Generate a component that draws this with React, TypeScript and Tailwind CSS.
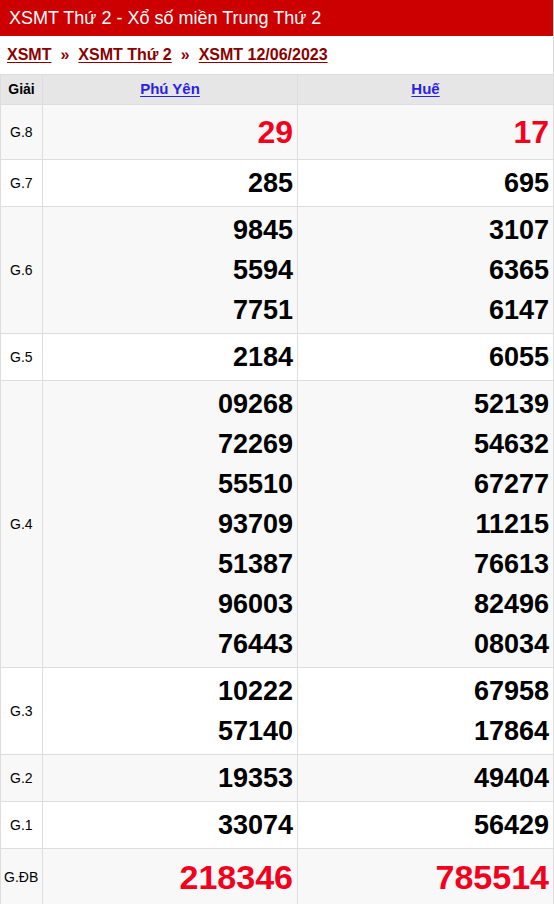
const rows: { label: string; a: string[]; b: string[]; red?: boolean; big?: "g8" | "db" }[] = [
  { label: "G.8", a: ["29"], b: ["17"], red: true, big: "g8" },
  { label: "G.7", a: ["285"], b: ["695"] },
  { label: "G.6", a: ["9845", "5594", "7751"], b: ["3107", "6365", "6147"] },
  { label: "G.5", a: ["2184"], b: ["6055"] },
  {
    label: "G.4",
    a: ["09268", "72269", "55510", "93709", "51387", "96003", "76443"],
    b: ["52139", "54632", "67277", "11215", "76613", "82496", "08034"],
  },
  { label: "G.3", a: ["10222", "57140"], b: ["67958", "17864"] },
  { label: "G.2", a: ["19353"], b: ["49404"] },
  { label: "G.1", a: ["33074"], b: ["56429"] },
  { label: "G.ĐB", a: ["218346"], b: ["785514"], red: true, big: "db" },
]

function Nums({ list, red, big }: { list: string[]; red?: boolean; big?: "g8" | "db" }) {
  const size =
    big === "g8"
      ? "text-[32px] leading-[48px]"
      : big === "db"
        ? "text-[34px] leading-[50px]"
        : "text-[27px] leading-[40px]"
  return (
    <td className="border border-[#dddddd] py-[3px] pr-[4px] text-right align-middle">
      {list.map((n) => (
        <div key={n} className={`font-bold ${size} ${red ? "text-[#f2001c]" : "text-black"}`}>
          {n}
        </div>
      ))}
    </td>
  )
}

export default function App() {
  return (
    <div className="w-[554px] min-h-[904px] bg-white border-r border-[#d6d6d6] font-['Liberation_Sans',Arial,sans-serif]">
      <div className="h-[36px] bg-[#cc0000] flex items-center px-[9px]">
        <h1 className="text-white text-[18px] leading-none">XSMT Thứ 2 - Xổ số miền Trung Thứ 2</h1>
      </div>
      <div className="h-[38px] flex items-center px-[7px] gap-[9px] text-[16px] font-bold text-[#8b0000]">
        <a href="#" className="underline underline-offset-2">XSMT</a>
        <span>»</span>
        <a href="#" className="underline underline-offset-2">XSMT Thứ 2</a>
        <span>»</span>
        <a href="#" className="underline underline-offset-2">XSMT 12/06/2023</a>
      </div>
      <table className="w-[553px] border-collapse table-fixed">
        <colgroup>
          <col className="w-[42px]" />
          <col className="w-[255px]" />
          <col className="w-[256px]" />
        </colgroup>
        <thead>
          <tr className="bg-[#e6e6e6] h-[30px]">
            <th className="border border-[#dddddd] text-[14px] font-bold text-black text-center">Giải</th>
            <th className="border border-[#dddddd] text-[15px] font-bold text-center">
              <a href="#" className="text-[#2b1fe6] underline underline-offset-2">Phú Yên</a>
            </th>
            <th className="border border-[#dddddd] text-[15px] font-bold text-center">
              <a href="#" className="text-[#2b1fe6] underline underline-offset-2">Huế</a>
            </th>
          </tr>
        </thead>
        <tbody>
          {rows.map((r, i) => (
            <tr key={r.label} className={i % 2 === 0 ? "bg-[#f8f8f8]" : "bg-white"}>
              <td className={`border border-[#dddddd] text-[14px] text-black align-middle ${r.big === "db" ? "pl-[3px]" : "pl-[9px]"}`}>
                {r.label}
              </td>
              <Nums list={r.a} red={r.red} big={r.big} />
              <Nums list={r.b} red={r.red} big={r.big} />
            </tr>
          ))}
        </tbody>
      </table>
    </div>
  )
}
